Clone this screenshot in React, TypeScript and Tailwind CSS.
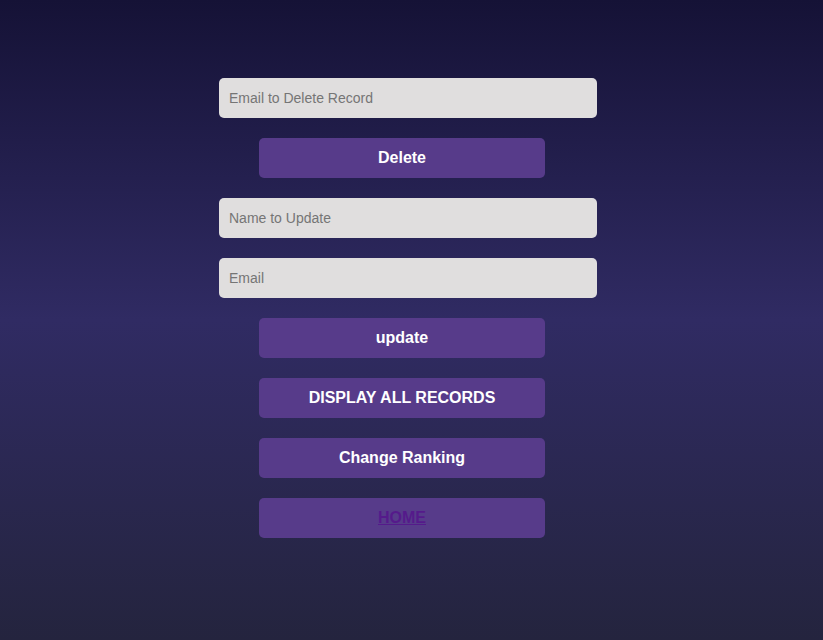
import React from 'react';

const inputCls =
  'h-10 w-full rounded-[5px] bg-[#e0dede] px-[10px] text-[14px] text-black outline-none placeholder:text-[#757575]';
const buttonCls =
  'ml-10 flex h-10 w-[286px] items-center justify-center rounded-[5px] bg-[#573b8a] text-[16px] font-bold text-white';

export default function App() {
  return (
    <div
      className="min-h-screen w-full bg-[linear-gradient(to_bottom,#151236,#302b63,#24243e)] pt-[78px]"
      style={{ fontFamily: '"Liberation Sans", Arial, sans-serif' }}
    >
      <div className="flex justify-center pr-[7px]">
        <div className="flex w-[378px] flex-col gap-5">
          <input className={inputCls} placeholder="Email to Delete Record" />
          <button className={buttonCls}>Delete</button>
          <input className={inputCls} placeholder="Name to Update" />
          <input className={inputCls} placeholder="Email" />
          <button className={buttonCls}>update</button>
          <button className={buttonCls}>DISPLAY ALL RECORDS</button>
          <button className={buttonCls}>Change Ranking</button>
          <div className={buttonCls}>
            <a href="#" className="text-[#551a8b] underline">
              HOME
            </a>
          </div>
        </div>
      </div>
    </div>
  );
}
